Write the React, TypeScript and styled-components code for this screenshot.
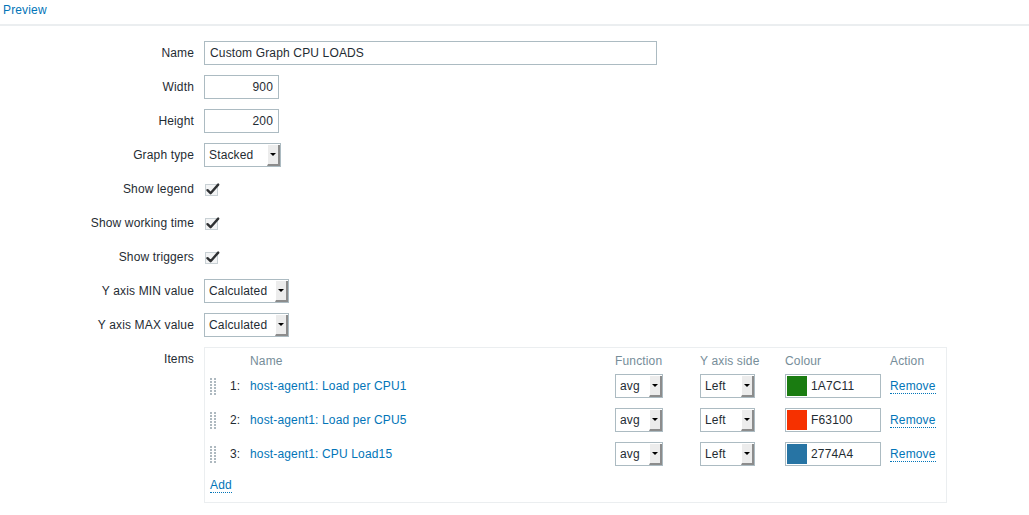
import React from 'react';
import styled, { createGlobalStyle } from 'styled-components';

const GlobalStyle = createGlobalStyle`
  html, body {
    margin: 0;
    padding: 0;
    background: #ffffff;
  }
  body {
    font-family: "Liberation Sans", Arial, sans-serif;
    font-size: 12px;
    letter-spacing: 0.15px;
    color: #1f2c33;
  }
`;

type Item = { name: string; colour: string };

const items: Item[] = [
  { name: 'host-agent1: Load per CPU1', colour: '1A7C11' },
  { name: 'host-agent1: Load per CPU5', colour: 'F63100' },
  { name: 'host-agent1: CPU Load15', colour: '2774A4' },
];

function Select({ value, width }: { value: string; width: number }) {
  return (
    <SelectBox $width={width}>
      <SelectText>{value}</SelectText>
      <SelectButton />
    </SelectBox>
  );
}

function Checkbox() {
  return (
    <CheckWrap>
      <svg width="16" height="16" viewBox="0 0 16 16">
        <rect x="1.5" y="3.5" width="12" height="11" fill="#f3f4f5" stroke="#c9d1d5" />
        <path d="M3.5 9.2 L6.6 12.2 L14.2 3.6" fill="none" stroke="#2f3133" strokeWidth="2.4" strokeLinecap="round" strokeLinejoin="round" />
      </svg>
    </CheckWrap>
  );
}

function DragHandle() {
  const dots = [];
  for (let r = 0; r < 6; r++) {
    for (let c = 0; c < 2; c++) {
      dots.push(<rect key={`${r}-${c}`} x={c * 4} y={r * 3} width="2" height="2" fill="#aeb9c0" />);
    }
  }
  return (
    <svg width="6" height="17" viewBox="0 0 6 17">
      {dots}
    </svg>
  );
}

export default function App() {
  return (
    <>
      <GlobalStyle />
      <TabBar>
        <Tab href="#">Preview</Tab>
      </TabBar>
      <FormList>
        <Row>
          <Label>Name</Label>
          <TextInput $width={453} readOnly value="Custom Graph CPU LOADS" />
        </Row>
        <Row>
          <Label>Width</Label>
          <TextInput $width={75} $right readOnly value="900" />
        </Row>
        <Row>
          <Label>Height</Label>
          <TextInput $width={75} $right readOnly value="200" />
        </Row>
        <Row>
          <Label>Graph type</Label>
          <Select value="Stacked" width={77} />
        </Row>
        <Row>
          <Label>Show legend</Label>
          <Checkbox />
        </Row>
        <Row>
          <Label>Show working time</Label>
          <Checkbox />
        </Row>
        <Row>
          <Label>Show triggers</Label>
          <Checkbox />
        </Row>
        <Row>
          <Label>Y axis MIN value</Label>
          <Select value="Calculated" width={85} />
        </Row>
        <Row>
          <Label>Y axis MAX value</Label>
          <Select value="Calculated" width={85} />
        </Row>
        <Row>
          <Label>Items</Label>
          <ItemsBox>
            <HeaderRow>
              <span />
              <span />
              <HeaderCell>Name</HeaderCell>
              <HeaderCell>Function</HeaderCell>
              <HeaderCell>Y axis side</HeaderCell>
              <HeaderCell>Colour</HeaderCell>
              <HeaderCell>Action</HeaderCell>
            </HeaderRow>
            {items.map((item, i) => (
              <ItemRow key={item.colour}>
                <Cell><DragHandle /></Cell>
                <Cell>{i + 1}:</Cell>
                <Cell><ItemLink href="#">{item.name}</ItemLink></Cell>
                <Cell><Select value="avg" width={48} /></Cell>
                <Cell><Select value="Left" width={55} /></Cell>
                <Cell>
                  <ColourBox>
                    <Swatch style={{ background: `#${item.colour}` }} />
                    <ColourText>{item.colour}</ColourText>
                  </ColourBox>
                </Cell>
                <Cell><DottedLink href="#">Remove</DottedLink></Cell>
              </ItemRow>
            ))}
            <AddRow>
              <DottedLink href="#">Add</DottedLink>
            </AddRow>
          </ItemsBox>
        </Row>
      </FormList>
    </>
  );
}

const TabBar = styled.div`
  height: 24px;
  border-bottom: 2px solid #ebeef0;
`;

const Tab = styled.a`
  display: inline-block;
  padding: 0 3px;
  line-height: 20px;
  color: #0275b8;
  text-decoration: none;
`;

const FormList = styled.ul`
  list-style: none;
  margin: 0;
  padding: 15px 0 0;
`;

const Row = styled.li`
  display: flex;
  align-items: flex-start;
  padding-bottom: 10px;
`;

const Label = styled.label`
  flex-shrink: 0;
  width: 194px;
  padding-right: 10px;
  text-align: right;
  line-height: 24px;
  white-space: nowrap;
`;

const TextInput = styled.input<{ $width: number; $right?: boolean }>`
  box-sizing: border-box;
  width: ${p => p.$width}px;
  height: 24px;
  margin: 0;
  padding: 0 5px;
  border: 1px solid #acbbc2;
  font-family: inherit;
  font-size: 12px;
  letter-spacing: inherit;
  color: #1f2c33;
  background: #ffffff;
  text-align: ${p => (p.$right ? 'right' : 'left')};
  outline: none;
`;

const SelectBox = styled.div<{ $width: number }>`
  box-sizing: border-box;
  display: flex;
  width: ${p => p.$width}px;
  height: 24px;
  border: 1px solid #acbbc2;
  background: #ffffff;
`;

const SelectText = styled.span`
  flex: 1;
  padding-left: 4px;
  line-height: 22px;
  white-space: nowrap;
  overflow: hidden;
`;

const SelectButton = styled.span`
  box-sizing: border-box;
  display: flex;
  align-items: center;
  justify-content: center;
  width: 13px;
  margin: 1px 0 0;
  background: #ececec;
  border-left: 1px solid #ffffff;
  border-right: 2px solid #8c8c8c;
  border-bottom: 2px solid #8c8c8c;

  &::after {
    content: '';
    width: 0;
    height: 0;
    border-left: 3px solid transparent;
    border-right: 3px solid transparent;
    border-top: 3px solid #000000;
  }
`;

const CheckWrap = styled.span`
  display: flex;
  align-items: center;
  height: 24px;
`;

const ItemsBox = styled.div`
  box-sizing: border-box;
  width: 743px;
  border: 1px solid #ebeef0;
  padding: 5px;
`;

const ItemRow = styled.div`
  display: grid;
  grid-template-columns: 20px 20px 365px 85px 85px 105px 1fr;
`;

const HeaderRow = styled(ItemRow)`
  height: 16px;
`;

const HeaderCell = styled.div`
  color: #768d99;
  line-height: 16px;
  white-space: nowrap;
`;

const Cell = styled.div`
  display: flex;
  align-items: center;
  height: 34px;
  white-space: nowrap;
`;

const ItemLink = styled.a`
  color: #0275b8;
  text-decoration: none;
`;

const DottedLink = styled.a`
  color: #0275b8;
  text-decoration: none;
  border-bottom: 1px dotted #0275b8;
  line-height: 14px;
`;

const ColourBox = styled.div`
  box-sizing: border-box;
  display: flex;
  align-items: center;
  width: 96px;
  height: 24px;
  border: 1px solid #acbbc2;
  padding-left: 1px;
`;

const Swatch = styled.span`
  width: 20px;
  height: 20px;
`;

const ColourText = styled.span`
  padding-left: 4px;
`;

const AddRow = styled.div`
  padding: 6px 0 4px;
  line-height: 16px;
`;
